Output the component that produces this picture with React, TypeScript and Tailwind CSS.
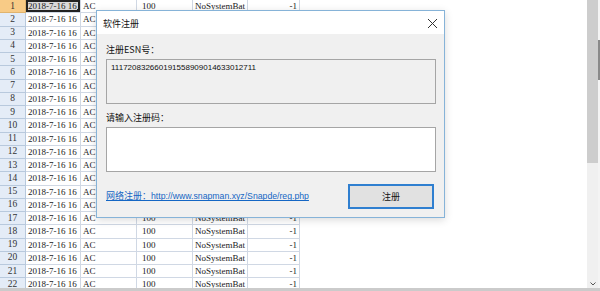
const rows = Array.from({ length: 22 }, (_, i) => i + 1)

const cell = 'shrink-0 border-r border-b border-[#d0d8e4] pl-[2px] overflow-hidden whitespace-nowrap'

const SheetRow = ({ n }: { n: number }) => {
  const selected = n === 1
  return (
    <div className="flex h-[13.25px] shrink-0 items-center leading-[13px]">
      <div
        className={
          selected
            ? 'flex h-full w-[26px] shrink-0 items-center justify-center border-r border-b border-[#e0b46e] bg-[#f8cb86] text-[9.5px] text-[#333]'
            : 'flex h-full w-[26px] shrink-0 items-center justify-center border-r border-b border-[#b8c9dd] bg-[#e4ecf7] text-[9.5px] text-[#333]'
        }
      >
        {n}
      </div>
      <div className={`${cell} relative h-full w-[55px] ${selected ? 'bg-[#d9d9d9]' : ''}`}>
        2018-7-16 16
        {selected && (
          <>
            <div className="absolute inset-0 border-2 border-[#222]" />
            <div className="absolute right-[-1px] bottom-[-1px] h-[4px] w-[4px] bg-[#222]" />
          </>
        )}
      </div>
      <div className={`${cell} h-full w-[56px]`}>AC</div>
      <div className={`${cell} h-full w-[56px] pl-[5px]`}>100</div>
      <div className={`${cell} h-full w-[55px]`}>NoSystemBat</div>
      <div className={`${cell} h-full w-[52px] pr-[2px] text-right`}>-1</div>
    </div>
  )
}

const Dialog = () => (
  <div className="absolute top-[10px] left-[96px] flex h-[208px] w-[349px] flex-col border border-[#86b3d8] bg-[#f0f0f0] shadow-[0_2px_8px_rgba(0,0,0,0.15)] font-['Noto_Sans_CJK_SC',sans-serif] text-[9px] text-[#111]">
    <div className="flex h-[23px] shrink-0 items-center justify-between bg-white pt-[1px] pr-[6px] pl-[6px]">
      <span className="leading-none">软件注册</span>
      <svg width="11" height="11" viewBox="0 0 11 11">
        <path d="M1 1 L10 10 M10 1 L1 10" stroke="#333" strokeWidth="1" />
      </svg>
    </div>
    <div className="flex flex-1 flex-col pt-[10px] pr-[8px] pl-[9px]">
      <div className="h-[12px] leading-[12px]">注册ESN号：</div>
      <div className="mt-[3px] h-[45px] border border-[#a5a5a5] bg-[#f0f0f0] px-[4px] pt-[3px] font-['Liberation_Sans',sans-serif] text-[8px] leading-[10px]">
        111720832660191558909014633012711
      </div>
      <div className="mt-[8px] h-[12px] leading-[12px]">请输入注册码：</div>
      <div className="mt-[3px] h-[45px] border border-[#a5a5a5] bg-white" />
      <div className="mt-[12px] flex items-center justify-between pr-[2px]">
        <a className="text-[#1466c4] underline decoration-[#1466c4]">
          网络注册：<span className="font-['Liberation_Sans',sans-serif] text-[8.7px]">http://www.snapman.xyz/Snapde/reg.php</span>
        </a>
        <button className="flex h-[25px] w-[86px] items-center justify-center border-2 border-[#2f7fd0] bg-[#e1e1e1] text-[9px]">
          注册
        </button>
      </div>
    </div>
  </div>
)

export default function App() {
  return (
    <div className="relative flex h-[291px] w-[600px] flex-col overflow-hidden bg-white">
      <div className="flex min-h-0 flex-1">
        <div className="flex flex-1 flex-col overflow-hidden font-['Liberation_Serif',serif] text-[9px] text-[#1a1a1a]">
          {rows.map((n) => (
            <SheetRow key={n} n={n} />
          ))}
        </div>
        <div className="flex w-[13px] shrink-0">
          <div className="flex w-[11px] flex-col bg-[#f0f0f0]">
            <div className="h-[163px] w-full bg-[#cdcdcd]" />
            <div className="flex flex-1 items-end justify-center pb-[2px]">
              <svg width="6" height="4" viewBox="0 0 6 4">
                <path d="M0.5 0.5 L3 3 L5.5 0.5" stroke="#555" strokeWidth="1" fill="none" />
              </svg>
            </div>
          </div>
          <div className="flex w-[2px] flex-col bg-[#f4f4f4] pt-[40px]">
            <div className="h-[40px] w-full bg-[#8a8a8a]" />
          </div>
        </div>
      </div>
      <div className="h-[3px] shrink-0 bg-[#cbcbcb]" />
      <Dialog />
    </div>
  )
}
